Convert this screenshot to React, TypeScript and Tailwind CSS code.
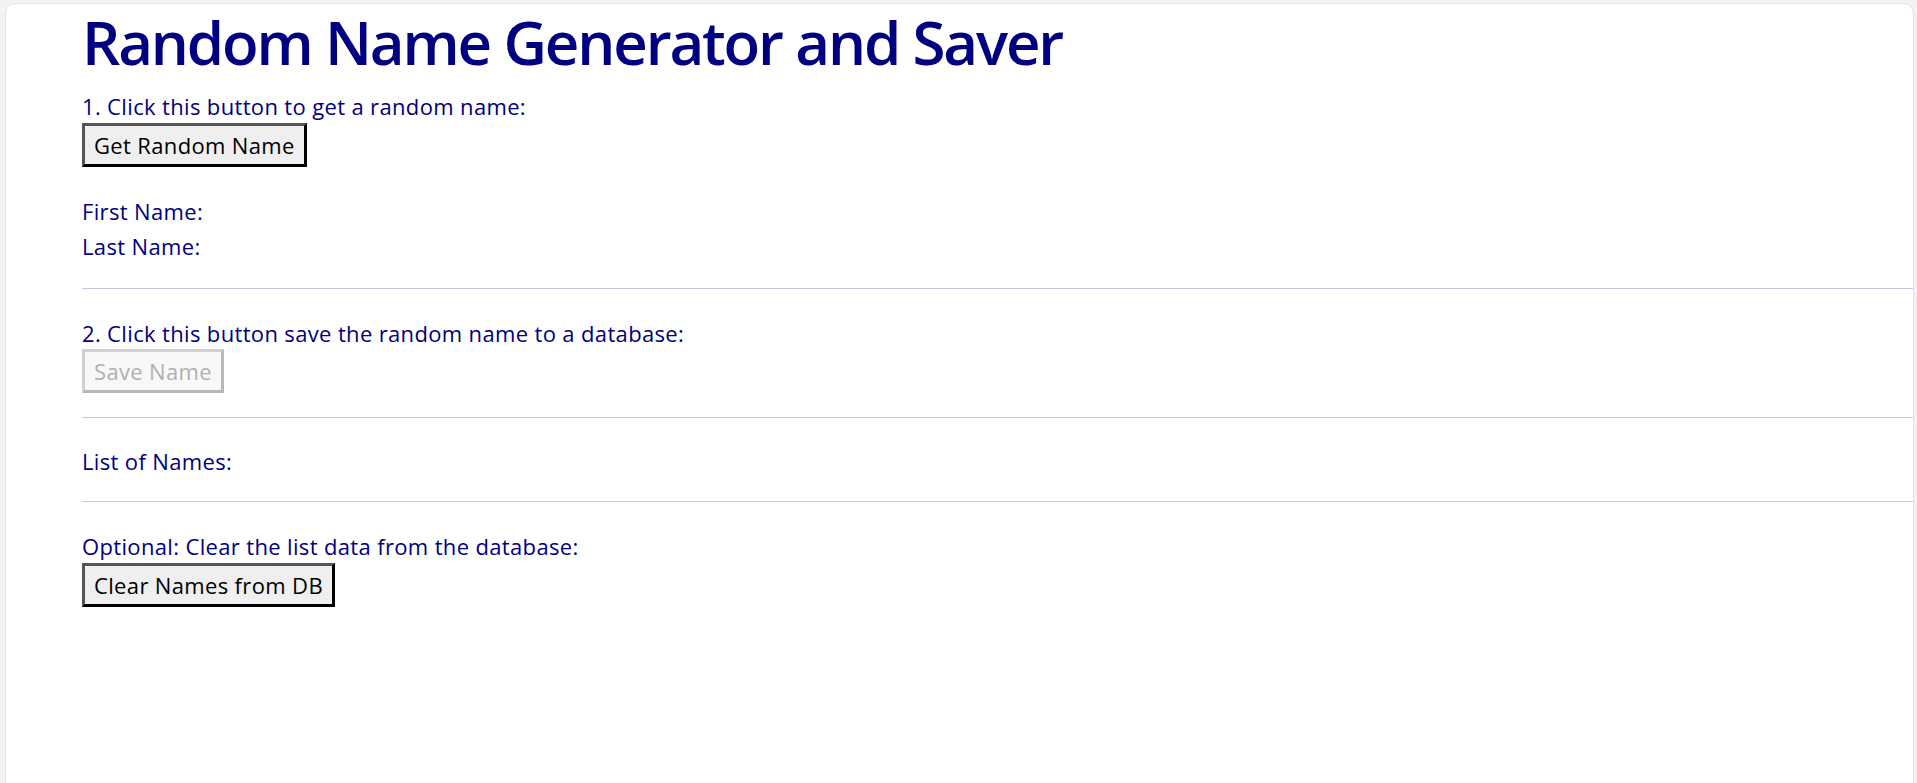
export default function App() {
  return (
    <div className="h-screen bg-[#f3f3f3] pt-[3px] pl-[5px] pr-[3px] overflow-hidden" style={{ fontFamily: '"Open Sans", "Noto Sans", sans-serif' }}>
      <div className="h-[820px] rounded-[10px] border border-[#e3e3e3] bg-white pl-[76px] text-[22px] tracking-[0.35px]">
        <h1 className="pt-[2px] text-[60px] leading-[72px] font-semibold tracking-[-2.15px] text-[#000080]">
          Random Name Generator and Saver
        </h1>

        <p className="mt-[14px] leading-[28px] text-[#000080]">1. Click this button to get a random name:</p>
        <button className="mt-[3px] h-[44px] border-[3px] border-t-[#555] border-l-[#555] border-b-black border-r-black bg-[#efefef] px-[9px] text-black">
          Get Random Name
        </button>

        <div className="mt-[27px] leading-[35px] text-[#000080]">
          <div>First Name:</div>
          <div>Last Name:</div>
        </div>

        <hr className="mt-[24px] border-t border-[#c5c5e5]" />

        <p className="mt-[30px] leading-[28px] text-[#000080]">2. Click this button save the random name to a database:</p>
        <button disabled className="mt-[2px] h-[44px] border-[3px] border-t-[#cfcfcf] border-l-[#cfcfcf] border-b-[#b8b8b8] border-r-[#b8b8b8] bg-[#f8f8f8] px-[9px] text-[#b0b0b0]">
          Save Name
        </button>

        <hr className="mt-[24px] border-t border-[#c5c5e5]" />

        <p className="mt-[29px] leading-[28px] text-[#000080]">List of Names:</p>

        <hr className="mt-[26px] border-t border-[#c5c5e5]" />

        <p className="mt-[30px] leading-[28px] text-[#000080]">Optional: Clear the list data from the database:</p>
        <button className="mt-[3px] h-[44px] border-[3px] border-t-[#555] border-l-[#555] border-b-black border-r-black bg-[#efefef] px-[9px] text-black">
          Clear Names from DB
        </button>
      </div>
    </div>
  );
}
